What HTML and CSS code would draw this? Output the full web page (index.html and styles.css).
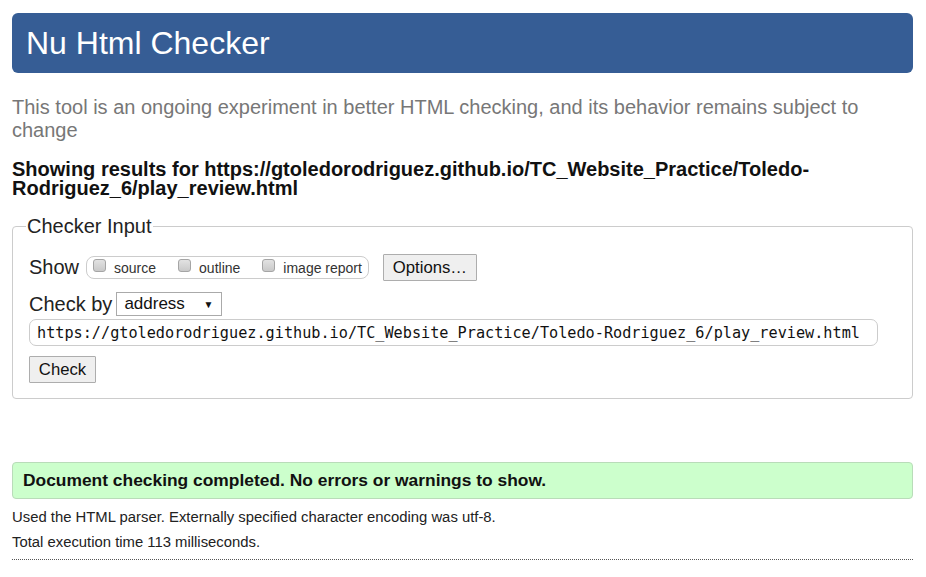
FILE: index.html
```html
<!DOCTYPE html>
<html>
<head>
<meta charset="utf-8">
<link rel="stylesheet" href="styles.css">
</head>
<body>
<h1 class="title">Nu Html Checker</h1>
<p class="intro">This tool is an ongoing experiment in better HTML checking, and its behavior remains subject to change</p>
<p class="showing">Showing results for https://gtoledorodriguez.github.io/TC_Website_Practice/Toledo-Rodriguez_6/play_review.html</p>
<fieldset class="input-box">
  <legend class="legend">Checker Input</legend>
  <div class="row show-row">
    <span class="row-label">Show</span>
    <span class="pill">
      <label class="opt"><span class="cb"></span>source</label>
      <label class="opt"><span class="cb"></span>outline</label>
      <label class="opt"><span class="cb"></span>image report</label>
    </span>
    <span class="btn options">Options…</span>
  </div>
  <div class="row by-row">
    <span class="row-label">Check by</span>
    <span class="select">address<span class="arrow">▼</span></span>
  </div>
  <div class="url">https://gtoledorodriguez.github.io/TC_Website_Practice/Toledo-Rodriguez_6/play_review.html</div>
  <div class="btn check">Check</div>
</fieldset>
<div class="success">Document checking completed. No errors or warnings to show.</div>
<p class="details first">Used the HTML parser. Externally specified character encoding was utf-8.</p>
<p class="details">Total execution time 113 milliseconds.</p>
<hr class="dots">
</body>
</html>
```
FILE: styles.css
```css
html, body {
  margin: 0;
  padding: 0;
  background: #fff;
}
body {
  padding: 13px 13px 0 12px;
  font-family: "Liberation Sans", Arial, sans-serif;
  color: #111;
}
.title {
  margin: 0;
  height: 60px;
  display: flex;
  align-items: center;
  padding-left: 14px;
  background: #365d95;
  border-radius: 6px;
  color: #fff;
  font-weight: normal;
  font-size: 32px;
}
.intro {
  margin: 23px 0 0 0;
  font-size: 20px;
  line-height: 23px;
  color: #777;
}
.showing {
  margin: 18px 0 0 0;
  font-size: 20px;
  line-height: 19px;
  font-weight: bold;
  color: #111;
}
.input-box {
  margin: 17px 0 0 0;
  padding: 17px 16px 15px 16px;
  border: 1px solid #ccc;
  border-radius: 4px;
}
.legend {
  padding: 0 1px;
  margin-left: -3px;
  font-size: 20px;
  line-height: 22px;
  color: #222;
}
.row {
  display: flex;
  align-items: center;
}
.row-label {
  font-size: 20px;
  color: #222;
}
.show-row {
  height: 27px;
}
.pill {
  margin-left: 7px;
  display: flex;
  align-items: center;
  box-sizing: border-box;
  height: 23px;
  border: 1px solid #ccc;
  border-radius: 8px;
  padding: 0 6px 0 6px;
  font-size: 14px;
  color: #333;
}
.opt {
  display: flex;
  align-items: center;
  margin-right: 22px;
}
.opt:last-child { margin-right: 0; }
.cb {
  box-sizing: border-box;
  width: 13px;
  height: 13px;
  border: 1px solid #a5a5a5;
  border-radius: 3px;
  background: linear-gradient(#e2e2e2, #c9c9c9);
  margin-right: 8px;
  margin-top: -5px;
}
.btn {
  box-sizing: border-box;
  display: inline-flex;
  align-items: center;
  justify-content: center;
  border: 1px solid #adadad;
  background: #efefef;
  font-size: 16.7px;
  color: #111;
  border-radius: 1px;
}
.options {
  margin-left: 14px;
  width: 94px;
  height: 27px;
}
.by-row {
  margin-top: 11px;
}
.select {
  margin-left: 4px;
  box-sizing: border-box;
  width: 106px;
  height: 24px;
  border: 1px solid #aaa;
  display: flex;
  align-items: center;
  padding-left: 7px;
  font-size: 17px;
  color: #111;
}
.arrow {
  margin-left: auto;
  margin-right: 8px;
  font-size: 10px;
}
.url {
  margin-top: 3px;
  box-sizing: border-box;
  width: 849px;
  height: 27px;
  border: 1px solid #ccc;
  border-radius: 7px;
  display: flex;
  align-items: center;
  padding-left: 7px;
  font-family: "DejaVu Sans Mono", monospace;
  font-size: 15.2px;
  color: #111;
}
.check {
  margin-top: 10px;
  width: 67px;
  height: 27px;
}
.success {
  margin-top: 63px;
  box-sizing: border-box;
  height: 37px;
  background: #ccffcc;
  border: 1px solid #b9dcb9;
  border-radius: 4px;
  display: flex;
  align-items: center;
  padding-left: 10px;
  font-size: 17.4px;
  font-weight: bold;
  color: #111;
}
.details {
  margin: 0;
  font-size: 14.85px;
  line-height: 25px;
  color: #222;
}
.details.first {
  margin-top: 6px;
}
.dots {
  margin: 4px 0 0 0;
  border: 0;
  border-top: 1px dotted #555;
  height: 0;
}
```
